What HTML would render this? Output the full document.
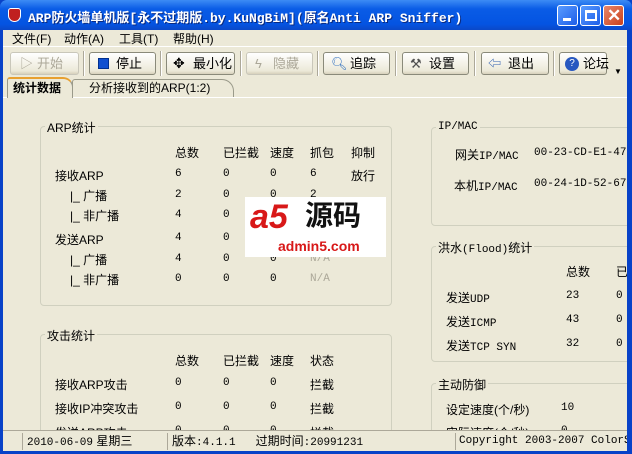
<!DOCTYPE html>
<html><head><meta charset="utf-8"><style>
*{margin:0;padding:0;box-sizing:border-box}
body{width:632px;height:454px;overflow:hidden;background:#0842c8;font-family:"Liberation Sans","Noto Sans CJK SC",sans-serif;font-size:12px;color:#000;position:relative}
.a{position:absolute;white-space:nowrap}
.title{left:0;top:0;width:632px;height:30px;background:linear-gradient(#3d8cf5,#0a5ce6 30%,#0454e2 80%,#0a48c8);border-radius:7px 7px 0 0}
.tt{left:28px;top:7px;color:#fff;font-family:"Liberation Mono","Noto Sans CJK SC",monospace;font-weight:bold;font-size:13px;text-shadow:1px 1px #0a2a80}
.cb{top:5px;width:21px;height:21px;border:1px solid #fff;border-radius:3px;background:linear-gradient(135deg,#5a9cff,#1d5ee8)}
.client{left:3px;top:30px;width:624px;height:421px;background:#ece9d8}
.menu span{position:absolute;top:0;white-space:nowrap}
.btn{top:52px;height:23px;border:1px solid #8a8a7a;border-radius:3px;background:linear-gradient(#fff,#ece9d8 85%,#d6d0bb);font-size:13px;line-height:21px;padding-left:26px}
.sep{top:51px;width:2px;height:25px;border-left:1px solid #aca899;border-right:1px solid #fff}
.grp{border:1px solid #d0d0bf;border-radius:4px}
.gl{background:#ece9d8;padding:0 2px;font-size:12px}
.m{font-family:"Liberation Mono","Noto Sans CJK SC",monospace;font-size:11px}
span{white-space:nowrap}
</style></head><body>
<div class="a title"></div>
<div class="a" style="left:8px;top:8px;width:13px;height:14px;background:#c02020;border-radius:3px 3px 7px 7px;border:1px solid #fff"></div>
<div class="a tt">ARP防火墙单机版[永不过期版.by.KuNgBiM](原名Anti ARP Sniffer)</div>
<div class="a cb" style="left:557px"><div class="a" style="left:5px;top:12px;width:8px;height:3px;background:#fff"></div></div>
<div class="a cb" style="left:580px"><div class="a" style="left:4px;top:4px;width:12px;height:11px;border:2px solid #fff;border-top-width:3px"></div></div>
<div class="a cb" style="left:603px;background:linear-gradient(135deg,#e8876a,#c8401c)"><div class="a" style="left:3px;top:0;color:#fff;font-size:17px;font-weight:bold;line-height:19px">✕</div></div>
<div class="a client"></div>
<div class="a menu" style="left:12px;top:30px;font-size:12px">
<span style="left:0">文件(F)</span><span style="left:52px">动作(A)</span><span style="left:107px">工具(T)</span><span style="left:161px">帮助(H)</span></div>
<div class="a" style="left:3px;top:46px;width:624px;height:1px;background:#fff"></div>
<div class="a btn" style="left:10px;width:69px;color:#aca899;border-color:#c9c7ba"><span class="a" style="left:9px;top:0;color:#aca899">▷</span>开始</div>
<div class="a sep" style="left:83px"></div>
<div class="a btn" style="left:89px;width:67px"><span class="a" style="left:8px;top:5px;width:11px;height:11px;background:#1050d0;border:1px solid #003090"></span>停止</div>
<div class="a sep" style="left:160px"></div>
<div class="a btn" style="left:166px;width:69px"><span class="a" style="left:6px;top:0;font-size:14px">✥</span>最小化</div>
<div class="a sep" style="left:240px"></div>
<div class="a btn" style="left:246px;width:67px;color:#aca899;border-color:#c9c7ba"><span class="a" style="left:8px;top:0;color:#aca899">ϟ</span>隐藏</div>
<div class="a sep" style="left:317px"></div>
<div class="a btn" style="left:323px;width:67px"><span class="a" style="left:7px;top:0;color:#3070c0">🔍︎</span>追踪</div>
<div class="a sep" style="left:395px"></div>
<div class="a btn" style="left:402px;width:67px"><span class="a" style="left:7px;top:0;color:#505050">⚒</span>设置</div>
<div class="a sep" style="left:474px"></div>
<div class="a btn" style="left:481px;width:68px"><span class="a" style="left:6px;top:0;color:#3060b0">⇦</span>退出</div>
<div class="a sep" style="left:553px"></div>
<div class="a btn" style="left:559px;width:48px;padding-left:23px"><span class="a" style="left:5px;top:4px;width:14px;height:14px;border-radius:50%;background:#2858c0;color:#fff;font-size:10px;line-height:14px;text-align:center">?</span>论坛</div>
<div class="a" style="left:614px;top:67px;font-size:8px">▼</div>
<div class="a" style="left:3px;top:97px;width:624px;height:1px;background:#fff"></div>
<div class="a" style="left:72px;top:79px;width:162px;height:18px;border:1px solid #9a9a8a;border-bottom:none;border-radius:3px 12px 0 0;background:#ece9d8;font-size:12px;line-height:17px;padding-left:16px">分析接收到的ARP(1:2)</div>
<div class="a" style="left:7px;top:77px;width:66px;height:21px;border:1px solid #9a9a8a;border-top:2px solid #e8a030;border-bottom:none;border-radius:3px 10px 0 0;background:#ece9d8;font-weight:bold;font-size:12px;line-height:18px;padding-left:5px">统计数据</div>
<div class="a grp" style="left:40px;top:126px;width:352px;height:180px"></div>
<div class="a gl" style="left:45px;top:119px">ARP统计</div>
<span class="a" style="left:175px;top:144px">总数</span><span class="a" style="left:223px;top:144px">已拦截</span><span class="a" style="left:270px;top:144px">速度</span><span class="a" style="left:310px;top:144px">抓包</span><span class="a" style="left:351px;top:144px">抑制</span>
<span class="a" style="left:55px;top:167px">接收ARP</span><span class="a m" style="left:175px;top:168px">6</span><span class="a m" style="left:223px;top:168px">0</span><span class="a m" style="left:270px;top:168px">0</span><span class="a m" style="left:310px;top:168px">6</span><span class="a" style="left:351px;top:167px">放行</span>
<span class="a" style="left:70px;top:187px">|_ 广播</span><span class="a m" style="left:175px;top:189px">2</span><span class="a m" style="left:223px;top:189px">0</span><span class="a m" style="left:270px;top:189px">0</span><span class="a m" style="left:310px;top:189px">2</span>
<span class="a" style="left:70px;top:207px">|_ 非广播</span><span class="a m" style="left:175px;top:209px">4</span><span class="a m" style="left:223px;top:209px">0</span>
<span class="a" style="left:55px;top:231px">发送ARP</span><span class="a m" style="left:175px;top:232px">4</span><span class="a m" style="left:223px;top:232px">0</span>
<span class="a" style="left:70px;top:251px">|_ 广播</span><span class="a m" style="left:175px;top:253px">4</span><span class="a m" style="left:223px;top:253px">0</span><span class="a m" style="left:270px;top:253px">0</span><span class="a m" style="left:310px;top:253px;color:#aca899">N/A</span>
<span class="a" style="left:70px;top:271px">|_ 非广播</span><span class="a m" style="left:175px;top:273px">0</span><span class="a m" style="left:223px;top:273px">0</span><span class="a m" style="left:270px;top:273px">0</span><span class="a m" style="left:310px;top:273px;color:#aca899">N/A</span>
<div class="a" style="left:245px;top:197px;width:141px;height:60px;background:#fff"></div>
<div class="a" style="left:250px;top:199px;font-size:34px;font-weight:bold;font-style:italic;color:#d81818;line-height:36px">a5</div>
<div class="a" style="left:305px;top:201px;font-size:28px;font-weight:bold;color:#111;line-height:30px">源码</div>
<div class="a" style="left:278px;top:238px;font-size:14px;font-weight:bold;color:#d81818;line-height:16px">admin5.com</div>
<div class="a grp" style="left:40px;top:334px;width:352px;height:110px"></div>
<div class="a gl" style="left:45px;top:327px">攻击统计</div>
<span class="a" style="left:175px;top:352px">总数</span><span class="a" style="left:223px;top:352px">已拦截</span><span class="a" style="left:270px;top:352px">速度</span><span class="a" style="left:310px;top:352px">状态</span>
<span class="a" style="left:55px;top:376px">接收ARP攻击</span><span class="a m" style="left:175px;top:377px">0</span><span class="a m" style="left:223px;top:377px">0</span><span class="a m" style="left:270px;top:377px">0</span><span class="a" style="left:310px;top:376px">拦截</span>
<span class="a" style="left:55px;top:400px">接收IP冲突攻击</span><span class="a m" style="left:175px;top:401px">0</span><span class="a m" style="left:223px;top:401px">0</span><span class="a m" style="left:270px;top:401px">0</span><span class="a" style="left:310px;top:400px">拦截</span>
<span class="a" style="left:55px;top:424px">发送ARP攻击</span><span class="a m" style="left:175px;top:425px">0</span><span class="a m" style="left:223px;top:425px">0</span><span class="a m" style="left:270px;top:425px">0</span><span class="a" style="left:310px;top:424px">拦截</span>
<div class="a grp" style="left:431px;top:127px;width:210px;height:99px"></div>
<div class="a gl m" style="left:436px;top:121px;font-size:11px">IP/MAC</div>
<span class="a" style="left:455px;top:146px">网关<span class="m">IP/MAC</span></span><span class="a m" style="left:534px;top:147px">00-23-CD-E1-47-</span>
<span class="a" style="left:454px;top:177px">本机<span class="m">IP/MAC</span></span><span class="a m" style="left:534px;top:178px">00-24-1D-52-67-</span>
<div class="a grp" style="left:431px;top:246px;width:210px;height:116px"></div>
<div class="a gl" style="left:436px;top:239px">洪水<span class="m">(Flood)</span>统计</div>
<span class="a" style="left:566px;top:263px">总数</span><span class="a" style="left:616px;top:263px">已</span>
<span class="a" style="left:446px;top:289px">发送<span class="m">UDP</span></span><span class="a m" style="left:566px;top:290px">23</span><span class="a m" style="left:616px;top:290px">0</span>
<span class="a" style="left:446px;top:313px">发送<span class="m">ICMP</span></span><span class="a m" style="left:566px;top:314px">43</span><span class="a m" style="left:616px;top:314px">0</span>
<span class="a" style="left:446px;top:337px">发送<span class="m">TCP SYN</span></span><span class="a m" style="left:566px;top:338px">32</span><span class="a m" style="left:616px;top:338px">0</span>
<div class="a grp" style="left:431px;top:383px;width:210px;height:70px"></div>
<div class="a gl" style="left:436px;top:376px">主动防御</div>
<span class="a" style="left:446px;top:401px">设定速度(个/秒)</span><span class="a m" style="left:561px;top:402px">10</span>
<span class="a" style="left:446px;top:424px">实际速度(个/秒)</span><span class="a m" style="left:561px;top:425px">0</span>
<div class="a" style="left:3px;top:430px;width:624px;height:21px;background:#ece9d8;border-top:1px solid #aca899"></div>
<div class="a" style="left:22px;top:433px;width:145px;height:17px;border-left:1px solid #aca899;font-size:12px;line-height:17px;padding-left:4px"><span class="m">2010-06-09</span> 星期三</div>
<div class="a" style="left:167px;top:433px;width:286px;height:17px;border-left:1px solid #aca899;font-size:12px;line-height:17px;padding-left:4px">版本<span class="m">:4.1.1</span>&nbsp;&nbsp;&nbsp;&nbsp;&nbsp;&nbsp;过期时间<span class="m">:20991231</span></div>
<div class="a m" style="left:455px;top:433px;width:172px;height:17px;border-left:1px solid #aca899;font-size:11px;line-height:17px;padding-left:3px;overflow:hidden">Copyright 2003-2007 ColorSoft</div>
<div class="a" style="left:627px;top:30px;width:5px;height:424px;background:#0842c8"></div>
<div class="a" style="left:0;top:451px;width:632px;height:3px;background:#0842c8"></div>
</body></html>
